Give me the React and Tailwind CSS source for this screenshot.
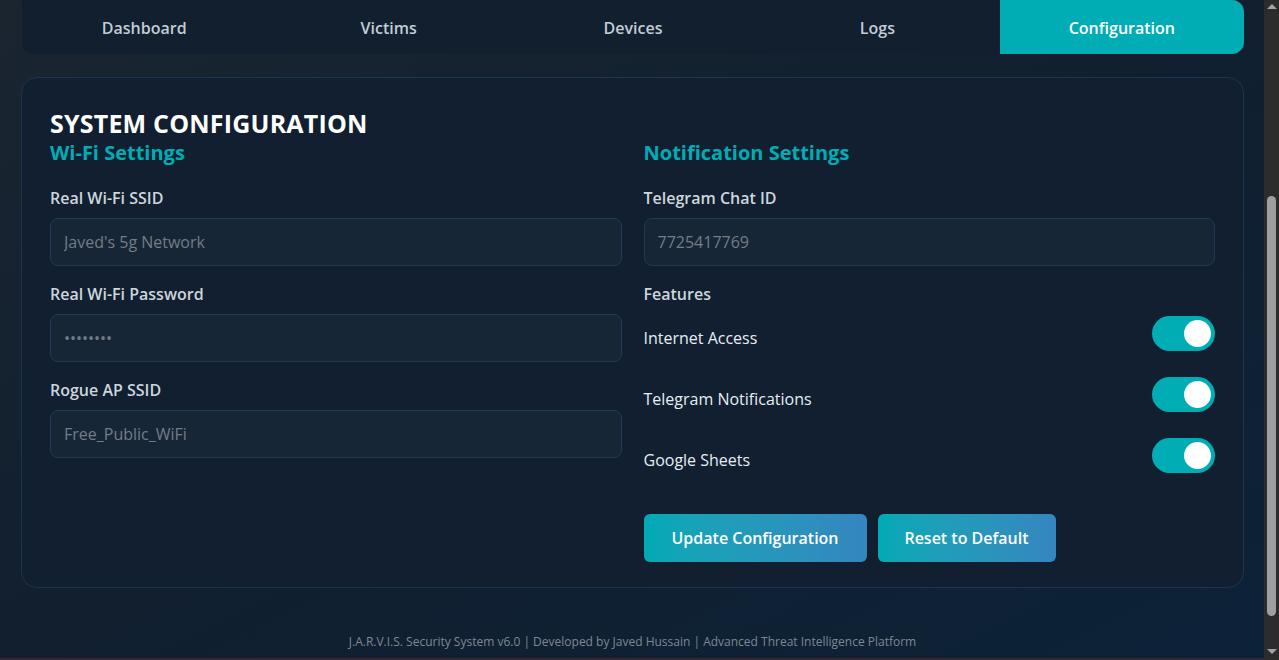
import { useState } from 'react';

const tabs = ['Dashboard', 'Victims', 'Devices', 'Logs', 'Configuration'];

const Field = ({ label, value }) => (
  <div className="mb-4">
    <label className="block text-[16px] leading-6 font-semibold text-[#cdd5dd] mb-2">{label}</label>
    <input
      readOnly
      value={value}
      className="w-full h-12 px-[13px] rounded-lg bg-[#172637] border border-[#1f3a56] text-[16px] text-[#737c86] outline-none"
    />
  </div>
);

const Toggle = ({ label, on, onClick }) => (
  <div className="flex items-center justify-between h-[35px] mb-[26px]">
    <span className="text-[16px] text-[#e6edf3] mt-2">{label}</span>
    <button
      onClick={onClick}
      className={`w-[63px] h-[35px] rounded-full flex items-center px-1 ${on ? 'bg-[#00adb5] justify-end' : 'bg-[#374151] justify-start'}`}
    >
      <span className="w-[27px] h-[27px] rounded-full bg-white" />
    </button>
  </div>
);

export default function App() {
  const [features, setFeatures] = useState({ internet: true, telegram: true, sheets: true });
  const flip = (k) => setFeatures({ ...features, [k]: !features[k] });

  return (
    <div className="h-[660px] flex overflow-hidden font-['Open_Sans',sans-serif]">
      <div className="flex-1 flex flex-col bg-gradient-to-br from-[#1a2530] via-[#111f2f] to-[#0c2238] pl-[21px] pr-[20px] border-b-2 border-[#3a2335]">
        {/* tabs */}
        <div className="flex h-[54px] bg-[#111f2f] rounded-b-xl ml-px">
          {tabs.map((t) => (
            <div
              key={t}
              className={`flex-1 flex items-center justify-center pt-[2px] text-[16px] font-semibold ${t === 'Configuration' ? 'bg-[#00adb5] text-white rounded-r-xl' : 'text-[#c3ccd5]'}`}
            >
              {t}
            </div>
          ))}
        </div>

        {/* card */}
        <div className="mt-[23px] h-[511px] bg-[#111f30] border border-[#1b3550] rounded-2xl px-[28px] pt-[29px]">
          <h1 className="text-[25px] leading-8 font-bold text-white tracking-[0.2px]">SYSTEM CONFIGURATION</h1>
          <div className="grid grid-cols-2 gap-[22px]">
            <div>
              <h2 className="text-[20px] leading-7 font-bold text-[#00adb5] mb-[19px]">Wi-Fi Settings</h2>
              <Field label="Real Wi-Fi SSID" value="Javed's 5g Network" />
              <Field label="Real Wi-Fi Password" value="••••••••" />
              <Field label="Rogue AP SSID" value="Free_Public_WiFi" />
            </div>
            <div>
              <h2 className="text-[20px] leading-7 font-bold text-[#00adb5] mb-[19px]">Notification Settings</h2>
              <Field label="Telegram Chat ID" value="7725417769" />
              <div className="text-[16px] leading-6 font-semibold text-[#cdd5dd] mb-[10px]">Features</div>
              <Toggle label="Internet Access" on={features.internet} onClick={() => flip('internet')} />
              <Toggle label="Telegram Notifications" on={features.telegram} onClick={() => flip('telegram')} />
              <Toggle label="Google Sheets" on={features.sheets} onClick={() => flip('sheets')} />
              <div className="flex gap-[11px] mt-[41px]">
                <button className="h-12 w-[223px] rounded-md bg-gradient-to-r from-[#00aab5] to-[#3486bf] text-white text-[16px] font-semibold">
                  Update Configuration
                </button>
                <button className="h-12 w-[178px] rounded-md bg-gradient-to-r from-[#00aab5] to-[#3486bf] text-white text-[16px] font-semibold">
                  Reset to Default
                </button>
              </div>
            </div>
          </div>
        </div>

        <div className="mt-auto mb-[7px] text-center text-[12px] text-[#7f8891]">
          J.A.R.V.I.S. Security System v6.0 | Developed by Javed Hussain | Advanced Threat Intelligence Platform
        </div>
      </div>

      {/* scrollbar */}
      <div className="w-[15px] bg-[#2c2c2c] flex flex-col items-center">
        <div className="mt-[4px] w-0 h-0 border-l-[5px] border-r-[5px] border-b-[5px] border-l-transparent border-r-transparent border-b-[#a3a3a3]" />
        <div className="mt-[187px] w-[9px] h-[420px] rounded-full bg-[#9f9f9f]" />
        <div className="mt-auto mb-[6px] w-0 h-0 border-l-[5px] border-r-[5px] border-t-[5px] border-l-transparent border-r-transparent border-t-[#a3a3a3]" />
      </div>
    </div>
  );
}
